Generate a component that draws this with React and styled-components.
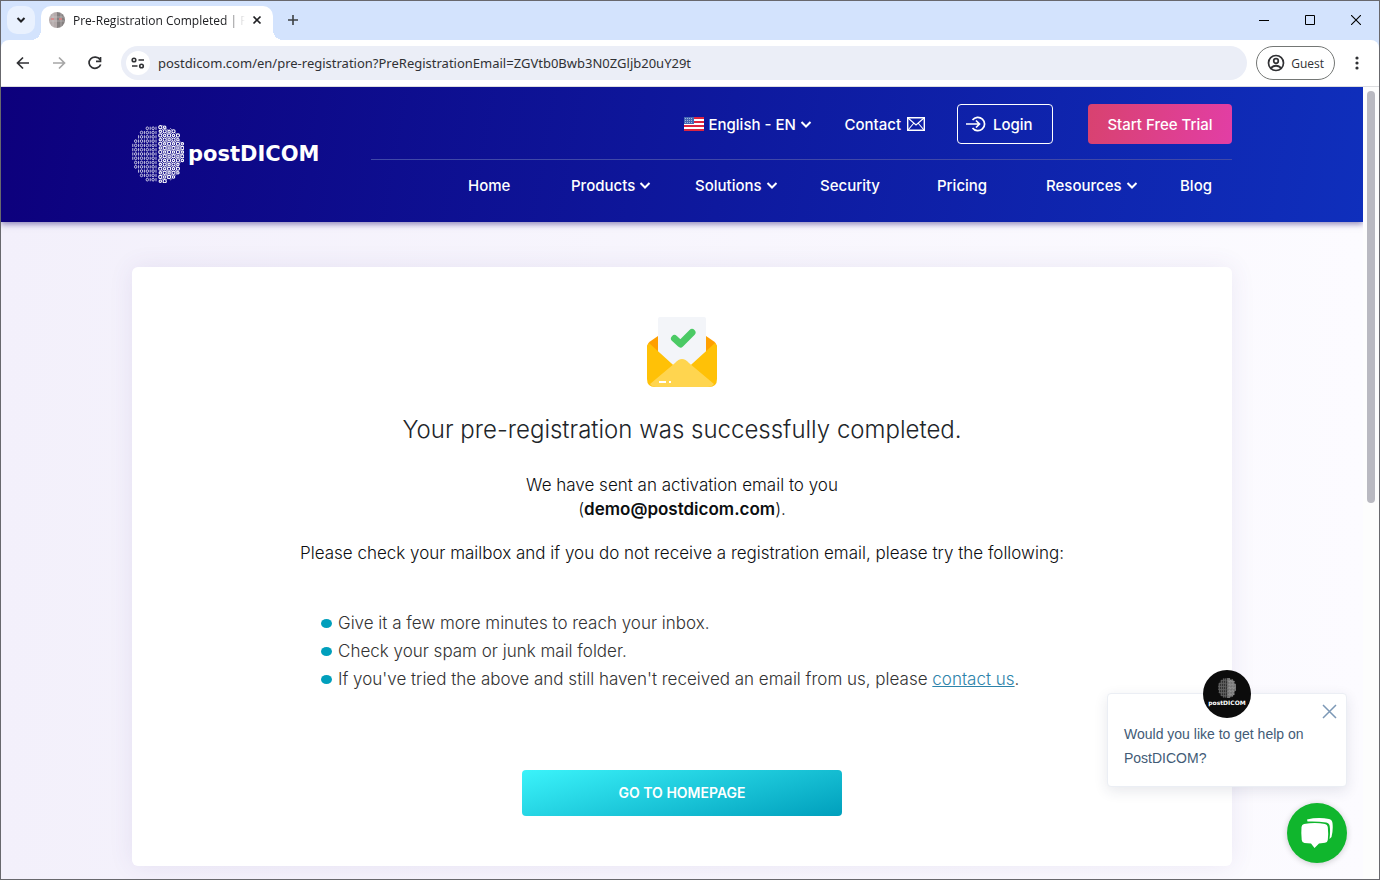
import React from 'react';
import styled, { createGlobalStyle, css } from 'styled-components';

const GlobalStyle = createGlobalStyle`
  *, *::before, *::after { box-sizing: border-box; }
  body { margin: 0; font-family: Inter, "Liberation Sans", sans-serif; }
  button, input, select { font: inherit; color: inherit; margin: 0; }
  button { padding: 0; border: 0; background: none; cursor: pointer; }
  h1, p, ul { margin: 0; padding: 0; }
  a { color: inherit; text-decoration: none; }
  svg { display: block; flex: none; }
`;

const BrowserWindow = styled.div`
  display: flex;
  flex-direction: column;
  height: 100vh;
  border: 1px solid #68686d;
  background: #d3e3fd;
  overflow: hidden;
`;

const chromeFont = css`
  font-family: "Open Sans", "Noto Sans", sans-serif;
`;

const TabStrip = styled.div`
  ${chromeFont}
  display: flex;
  flex: none;
  height: 39px;
  padding: 5px 0 0 6px;
  font-size: 12px;
`;

const TabSearch = styled.button`
  display: grid;
  place-items: center;
  width: 28px;
  height: 28px;
  border-radius: 10px;
  background: #e9f1fe;
`;

const Tab = styled.div`
  position: relative;
  display: flex;
  align-items: center;
  width: 232px;
  height: 34px;
  margin-left: 6px;
  padding: 0 4px 6px 8px;
  border-radius: 10px 10px 0 0;
  background: #fff;
  &::before, &::after {
    content: "";
    position: absolute;
    bottom: 0;
    width: 10px;
    height: 10px;
  }
  &::before { right: 100%; background: radial-gradient(circle at 0 0, transparent 10px, #fff 10px); }
  &::after { left: 100%; background: radial-gradient(circle at 100% 0, transparent 10px, #fff 10px); }
`;

const TabTitle = styled.span`
  flex: 1;
  margin-left: 8px;
  overflow: hidden;
  white-space: nowrap;
  color: #202124;
  mask-image: linear-gradient(to right, #000 88%, transparent);
`;

const SmallButton = styled.button`
  display: grid;
  place-items: center;
  width: 24px;
  height: 28px;
`;

const NewTab = styled(SmallButton)`
  margin-left: 8px;
`;

const WindowControls = styled.div`
  display: flex;
  margin-left: auto;
  button { width: 46px; }
`;

const Toolbar = styled.div`
  ${chromeFont}
  display: flex;
  align-items: center;
  flex: none;
  height: 47px;
  padding: 0 10px 0 4px;
  border-bottom: 1px solid #dcdde0;
  border-radius: 8px 8px 0 0;
  background: #fff;
  color: #303134;
`;

const ToolButton = styled.button`
  display: grid;
  place-items: center;
  width: 36px;
  height: 34px;
`;

const AddressBar = styled.div`
  display: flex;
  flex: 1;
  align-items: center;
  height: 34px;
  margin: 0 9px 0 8px;
  padding: 0 5px;
  border-radius: 17px;
  background: #ebeef7;
`;

const SiteInfo = styled.button`
  display: grid;
  place-items: center;
  width: 24px;
  height: 24px;
  border-radius: 50%;
  background: #fff;
`;

const AddressInput = styled.input`
  flex: 1;
  padding: 0;
  margin-left: 8px;
  border: 0;
  outline: 0;
  background: none;
  font-family: "Noto Sans", sans-serif;
  font-size: 13px;
`;

const GuestButton = styled.button`
  display: flex;
  align-items: center;
  gap: 6px;
  height: 34px;
  padding: 0 10px;
  border: 1px solid #747775;
  border-radius: 17px;
  font-size: 12px;
`;

const MenuButton = styled(SmallButton)`
  margin-left: 10px;
`;

const Viewport = styled.div`
  position: relative;
  display: flex;
  flex: 1;
  min-height: 0;
  background: #fff;
`;

const Page = styled.div`
  flex: 1;
  overflow: hidden;
  background: linear-gradient(90deg, #f3f0fb, #fcfbff);
`;

const Scrollbar = styled.div`
  width: 16px;
  padding: 4px;
  background: #fdfdfd;
`;

const Thumb = styled.div`
  height: 52.5%;
  border-radius: 4px;
  background: #b9b9c1;
`;

const SiteHeader = styled.header`
  position: relative;
  padding: 0 20px;
  background: linear-gradient(100deg, #0d007c, #0f2fbc);
  box-shadow: 0 2px 6px #1b0c7080;
  color: #fff;
`;

const HeaderInner = styled.div`
  display: flex;
  justify-content: space-between;
  max-width: 1100px;
  height: 135px;
  margin: 0 auto;
`;

const Brand = styled.a`
  display: flex;
  align-items: center;
  gap: 4px;
  padding-bottom: 2px;
  font: bold 21px "DejaVu Sans", sans-serif;
`;

const HeaderRight = styled.div`
  width: 861px;
  font-size: 15px;
  font-weight: 500;
`;

const UtilityRow = styled.div`
  display: flex;
  align-items: center;
  justify-content: flex-end;
  height: 73px;
  padding-top: 2px;
  border-bottom: 1px solid #4048a8;
`;

const Language = styled.label`
  display: flex;
  align-items: center;
  gap: 4px;
  select {
    appearance: none;
    padding: 0;
    border: 0;
    background: none;
  }
`;

const ContactLink = styled.a`
  display: flex;
  align-items: center;
  gap: 6px;
  margin: 0 32px;
`;

const LoginLink = styled.a`
  display: flex;
  align-items: center;
  gap: 6px;
  width: 96px;
  height: 40px;
  padding-left: 8px;
  border: 1px solid #fff;
  border-radius: 4px;
`;

const TrialLink = styled.a`
  display: grid;
  place-items: center;
  width: 144px;
  height: 40px;
  margin-left: 35px;
  border-radius: 4px;
  background: linear-gradient(100deg, #d8426f, #e23ea5);
`;

const MainNav = styled.nav`
  display: grid;
  grid-template-columns: 103px 124px 125px 117px 109px 134px 52px;
  justify-content: end;
  padding-top: 15px;
`;

const NavItem = styled.a`
  display: flex;
  align-items: center;
  gap: 4px;
  height: 20px;
`;

const Main = styled.main`
  padding: 45px 20px 20px;
`;

const Card = styled.section`
  display: flex;
  flex-direction: column;
  align-items: center;
  max-width: 1100px;
  margin: 0 auto;
  padding: 50px 20px;
  border-radius: 6px;
  background: #fff;
  box-shadow: 0 0 24px #50409018;
  color: #212529;
  font-size: 17px;
  font-weight: 300;
  line-height: 24px;
  text-align: center;
`;

const Title = styled.h1`
  margin: 26px 0 26px;
  font-size: 24px;
  line-height: 34px;
  font-weight: 300;
`;

const Paragraph = styled.p`
  margin-bottom: 20px;
  color: #0c0e10;
  strong { font-weight: 600; }
`;

const Tips = styled.ul`
  width: 722px;
  margin: 24px 0 77px;
  color: #333;
  line-height: 28px;
  text-align: left;
  list-style: none;
`;

const Tip = styled.li`
  display: flex;
  align-items: center;
  gap: 6px;
  &::before {
    content: "";
    width: 11px;
    height: 9px;
    border-radius: 50%;
    background: #009fbc;
  }
  a { color: #2d83aa; text-decoration: underline; }
`;

const HomeButton = styled.button`
  width: 320px;
  height: 46px;
  border-radius: 4px;
  background: linear-gradient(165deg, #3bf3fa, #009fbc);
  color: #fff;
  font-size: 14px;
  font-weight: 600;
`;

const ChatDock = styled.aside`
  position: absolute;
  right: 32px;
  bottom: 16px;
  display: flex;
  flex-direction: column;
  align-items: flex-end;
  gap: 16px;
`;

const ChatCard = styled.div`
  position: relative;
  width: 240px;
  height: 94px;
  padding: 28px 16px 0;
  border: 1px solid #ebeef4;
  border-radius: 4px;
  background: #fff;
  box-shadow: 0 4px 14px #2830501c;
  color: #425b76;
  font: 14px/24px "Liberation Sans", sans-serif;
`;

const Avatar = styled.div`
  position: absolute;
  top: -24px;
  left: 95px;
  display: flex;
  flex-direction: column;
  align-items: center;
  gap: 2px;
  width: 48px;
  height: 48px;
  padding-top: 8px;
  border-radius: 50%;
  background: #0c0c0c;
  color: #fff;
  font: bold 6px/6px "DejaVu Sans", sans-serif;
`;

const ChatClose = styled.button`
  position: absolute;
  top: 10px;
  right: 9px;
`;

const ChatLauncher = styled.button`
  display: grid;
  place-items: center;
  width: 60px;
  height: 60px;
  border-radius: 50%;
  background: #10b62d;
  box-shadow: 0 1px 6px #0003;
`;

const Stroke = ({ d, size = 16, color = 'currentColor', width = 2, ...rest }) => (
  <svg width={size} height={size} viewBox={`0 0 ${size} ${size}`} fill="none" stroke={color} strokeWidth={width} aria-hidden="true" {...rest}>
    <path d={d} />
  </svg>
);

const Chevron = () => (
  <svg width="12" height="12" viewBox="0 0 12 12" fill="none" stroke="currentColor" strokeWidth="2" aria-hidden="true">
    <path d="M1.500 4l4.500 4.500L10.500 4" />
  </svg>
);

const ROW_STARTS = [14, 8, 5.5, 2.2, 0, 0, 0, 0, 2.2, 2.2, 5.5, 8, 14];

const Globe = ({ width = 52, height = 58 }) => {
  const marks = [];
  ROW_STARTS.forEach((start, row) => {
    const y = 3.3 + row * 4.28;
    let n = 0;
    for (let x = 24; x >= start + 0.5; x -= 2.9, n += 1) {
      marks.push(
        n % 2 === 0
          ? <path key={`l${row}-${n}`} d={`M${x} ${y - 1.6}v3.2`} />
          : <ellipse key={`l${row}-${n}`} cx={x} cy={y} rx="1.2" ry="1.4" />
      );
    }
  });
  const nodes = [];
  for (let row = 0; row < 14; row += 1) {
    const y = 2.2 + row * 4.15;
    const reach = 26 * Math.sqrt(Math.max(0, 1 - ((y - 29) / 29.5) ** 2));
    for (let col = 0; col < 6; col += 1) {
      const x = 28.3 + col * 4.4;
      if (x - 26 <= reach) {
        nodes.push(<circle key={`r${row}-${col}`} cx={x} cy={y} r={(row + col) % 2 ? 1.2 : 1.6} />);
        if (col > 0) nodes.push(<path key={`d${row}-${col}`} d={`M${x - 1} ${y + 1}l-2.400 2.200M${x - 1} ${y - 1}l-2.400 -2.200`} strokeWidth="0.6" />);
      }
    }
  }
  return (
    <svg width={width} height={height} viewBox="0 0 52 58" fill="none" stroke="#fff" aria-hidden="true">
      <g strokeWidth="0.9" opacity="0.85">{marks}</g>
      <g strokeWidth="1.1">{nodes}</g>
    </svg>
  );
};

const Favicon = () => (
  <svg width="16" height="16" viewBox="0 0 16 16" aria-hidden="true">
    <path d="M8 0a8 8 0 0 0 0 16z" fill="#b4aaaa" />
    <path d="M8 0a8 8 0 0 1 0 16z" fill="#858080" />
    <path d="M1 5h14M1 9h14M4 1v14M12 1v14" stroke="#d0cccc" strokeWidth="0.5" />
    <path d="M2 7h3M10 7h3" stroke="#e08080" strokeWidth="1.5" />
  </svg>
);

const Flag = () => (
  <svg width="20" height="14" viewBox="0 0 20 14" aria-hidden="true">
    <rect width="20" height="14" fill="#fff" />
    <path d="M0 1h20M0 5h20M0 9h20M0 13h20" stroke="#dc2440" strokeWidth="2" />
    <rect width="10" height="7" fill="#4468b4" />
    <path d="M1 1.500h8M1 3.500h8M1 5.500h8" stroke="#b8c8e8" strokeWidth="0.8" strokeDasharray="1 1" />
  </svg>
);

const MailOutline = () => (
  <svg width="18" height="14" viewBox="0 0 18 14" fill="none" stroke="#fff" aria-hidden="true">
    <path d="M.7.7h16.600v12.600H.7z" strokeWidth="1.4" />
    <path d="M1 1l8 7 8-7M1 13l5.500-6.500M17 13l-5.500-6.500" strokeWidth="1.1" />
  </svg>
);

const LoginIcon = () => (
  <svg width="21" height="16" viewBox="0 0 21 16" fill="none" stroke="#fff" strokeWidth="1.7" aria-hidden="true">
    <path d="M0 8h13M10 4.500L13.500 8 10 11.500" />
    <path d="M6.500 4a6.700 6.700 0 1 1 0 8" />
  </svg>
);

const OpenMail = () => (
  <svg width="70" height="70" viewBox="0 0 70 70" aria-hidden="true">
    <path d="M11 19L3 24.500Q0 27 0 31l14 14h44l12-14q0-4-3-6.500L59 19z" fill="#ff9f00" />
    <path d="M13 0h44q2 0 2 2v45H11V2q0-2 2-2z" fill="#f3f5f9" />
    <path d="M0 30q0-2 2-4l33 30 33-30q2 2 2 4v32q0 8-8 8H8q-8 0-8-8z" fill="#ffc107" />
    <path d="M3 67l25-21q7-8 14 0l25 21q-2 3-6 3H9q-4 0-6-3z" fill="#ffd54f" />
    <path d="M27.500 21.500l6 5.500L45 15.500" fill="none" stroke="#4bca65" strokeWidth="7" strokeLinecap="round" strokeLinejoin="round" />
    <path d="M12 65h7M22 65h2" stroke="#fff" strokeWidth="2" />
  </svg>
);

const ChatIcon = () => (
  <svg width="32" height="30" viewBox="0 0 32 30" aria-hidden="true">
    <path d="M6 1.500Q17-1 28 1q3 .5 3.500 4 .8 7-1 14l-2 2q1-7 .2-13-.4-3-3.500-3.500Q16 3 6.500 3.500z" fill="#fff" />
    <path d="M3 6q11-2 21 0 2.500.3 2.800 3 .8 7 0 13-.3 2.500-2.800 2.800l-6 .7-4.500 4.500L10 25.500 3.500 25Q1 24.700.7 22 0 15 .5 9 .8 6.500 3 6z" fill="#fff" />
  </svg>
);

const NAV = [
  { label: 'Home' },
  { label: 'Products', menu: true },
  { label: 'Solutions', menu: true },
  { label: 'Security' },
  { label: 'Pricing' },
  { label: 'Resources', menu: true },
  { label: 'Blog' },
];

export default function App() {
  return (
    <BrowserWindow>
      <GlobalStyle />
      <TabStrip>
        <TabSearch aria-label="Search tabs"><Stroke size={10} d="M1.500 3L5 6.500 8.500 3" color="#202124" /></TabSearch>
        <Tab>
          <Favicon />
          <TabTitle>Pre-Registration Completed | Po</TabTitle>
          <SmallButton aria-label="Close tab"><Stroke size={10} d="M1.500 1.500l7 7M8.500 1.500l-7 7" color="#202124" width={1.7} /></SmallButton>
        </Tab>
        <NewTab aria-label="New tab"><Stroke size={12} d="M6 1v10M1 6h10" color="#3c4043" width={1.6} /></NewTab>
        <WindowControls>
          <SmallButton aria-label="Minimize"><Stroke size={10} d="M0 5.500h10" color="#000" width={1} /></SmallButton>
          <SmallButton aria-label="Maximize"><Stroke size={10} d="M.5.5h9v9h-9z" color="#000" width={1} /></SmallButton>
          <SmallButton aria-label="Close"><Stroke size={10} d="M0 0l10 10M10 0L0 10" color="#000" width={1.1} /></SmallButton>
        </WindowControls>
      </TabStrip>
      <Toolbar>
        <ToolButton aria-label="Back"><Stroke d="M14 8H3M8 2.500L2.500 8 8 13.500" width={1.7} /></ToolButton>
        <ToolButton aria-label="Forward"><Stroke d="M2 8h11M8 2.500L13.500 8 8 13.500" color="#a6a6a6" width={1.7} /></ToolButton>
        <ToolButton aria-label="Reload"><Stroke d="M13 4.500A6 5.600 0 1 0 13.700 9.500M13.500 2v4.300H9" width={1.7} /></ToolButton>
        <AddressBar>
          <SiteInfo aria-label="Site information">
            <svg width="14" height="12" viewBox="0 0 14 12" fill="none" stroke="#303134" strokeWidth="1.6" aria-hidden="true">
              <circle cx="3" cy="3" r="1.8" /><path d="M7.500 3H13M1 9h5.500" /><circle cx="10.500" cy="9" r="1.8" />
            </svg>
          </SiteInfo>
          <AddressInput aria-label="Address" defaultValue="postdicom.com/en/pre-registration?PreRegistrationEmail=ZGVtb0Bwb3N0ZGljb20uY29t" />
        </AddressBar>
        <GuestButton>
          <svg width="18" height="18" viewBox="0 0 18 18" fill="none" stroke="#303134" strokeWidth="1.7" aria-hidden="true">
            <circle cx="9" cy="9" r="7.5" /><circle cx="9" cy="7" r="2.3" /><path d="M3.800 14q5.200-4.500 10.400 0" />
          </svg>
          Guest
        </GuestButton>
        <MenuButton aria-label="Menu">
          <svg width="4" height="14" viewBox="0 0 4 14" fill="#303134" aria-hidden="true"><circle cx="2" cy="2" r="1.6" /><circle cx="2" cy="7" r="1.6" /><circle cx="2" cy="12" r="1.6" /></svg>
        </MenuButton>
      </Toolbar>
      <Viewport>
        <Page>
          <SiteHeader>
            <HeaderInner>
              <Brand href="#home"><Globe />postDICOM</Brand>
              <HeaderRight>
                <UtilityRow>
                  <Language>
                    <Flag />
                    <select aria-label="Language"><option>English - EN</option></select>
                    <Chevron />
                  </Language>
                  <ContactLink href="#contact">Contact <MailOutline /></ContactLink>
                  <LoginLink href="#login"><LoginIcon />Login</LoginLink>
                  <TrialLink href="#trial">Start Free Trial</TrialLink>
                </UtilityRow>
                <MainNav>
                  {NAV.map(({ label, menu }) => (
                    <NavItem key={label} href={`#${label.toLowerCase()}`}>{label}{menu && <Chevron />}</NavItem>
                  ))}
                </MainNav>
              </HeaderRight>
            </HeaderInner>
          </SiteHeader>
          <Main>
            <Card>
              <OpenMail />
              <Title>Your pre-registration was successfully completed.</Title>
              <Paragraph>We have sent an activation email to you<br />(<strong>demo@postdicom.com</strong>).</Paragraph>
              <Paragraph>Please check your mailbox and if you do not receive a registration email, please try the following:</Paragraph>
              <Tips>
                <Tip>Give it a few more minutes to reach your inbox.</Tip>
                <Tip>Check your spam or junk mail folder.</Tip>
                <Tip><span>If you've tried the above and still haven't received an email from us, please <a href="#contact">contact us</a>.</span></Tip>
              </Tips>
              <HomeButton>GO TO HOMEPAGE</HomeButton>
            </Card>
          </Main>
        </Page>
        <Scrollbar><Thumb /></Scrollbar>
        <ChatDock>
          <ChatCard>
            <Avatar><Globe width={18} height={20} />postDICOM</Avatar>
            <ChatClose aria-label="Close message"><Stroke size={15} d="M1 1l13 13M14 1L1 14" color="#7c98b6" width={1.5} /></ChatClose>
            <p>Would you like to get help on PostDICOM?</p>
          </ChatCard>
          <ChatLauncher aria-label="Open chat"><ChatIcon /></ChatLauncher>
        </ChatDock>
      </Viewport>
    </BrowserWindow>
  );
}
